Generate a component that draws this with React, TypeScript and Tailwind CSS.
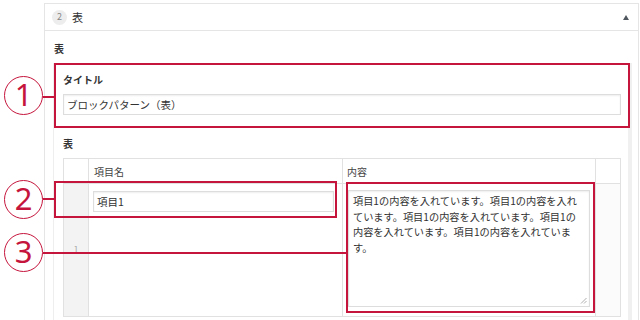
const red = "border-[#c5153c]";

const lines = [
  "項目1の内容を入れています。項目1の内容を入れ",
  "ています。項目1の内容を入れています。項目1の",
  "内容を入れています。項目1の内容を入れていま",
  "す。",
];

function Circle({ n, top }: { n: string; top: number }) {
  return (
    <div
      className="absolute left-[4px] w-[39px] h-[39px] rounded-full border-[1.5px] border-[#c5153c] flex items-center justify-center text-[#c5153c] text-[31px] leading-none font-['Noto_Sans',sans-serif]"
      style={{ top }}
    >
      <span className="-mt-[2px]">{n}</span>
    </div>
  );
}

export default function App() {
  return (
    <div className="relative w-[640px] h-[320px] overflow-hidden bg-white text-[#333] font-['Noto_Sans_CJK_JP','Noto_Sans',sans-serif]">
      <div className="ml-[44px] mt-[3px] w-[595px] h-[340px] border border-[#e5e5e5] bg-white">
        {/* header */}
        <div className="h-[27px] flex items-center pl-[7px] pr-[9px] border-b border-[#e5e5e5]">
          <span className="w-[15px] h-[15px] rounded-full bg-[#ededed] text-[#888] text-[9px] flex items-center justify-center">
            2
          </span>
          <span className="ml-[5px] text-[11px] leading-none">表</span>
          <span className="ml-auto w-0 h-0 border-l-[3px] border-r-[3px] border-b-[5px] border-l-transparent border-r-transparent border-b-[#50575e]" />
        </div>

        <div className="pl-[8px] pr-[6px] pt-[11px]">
          <div className="ml-px text-[10px] font-bold leading-[14px]">表</div>
          <div className="mt-[7px] h-[260px] border border-[#eee] border-r-4 border-r-[#f0f0f0] pl-[9px] pr-[7px] pt-[9px]">
            <div className="text-[10px] font-bold leading-[14px]">タイトル</div>
            <div className="mt-[7px] h-[21px] border border-[#ddd] shadow-[inset_0_1px_2px_rgba(0,0,0,0.07)] flex items-center px-[3px] text-[10.5px]">
              ブロックパターン（表）
            </div>
            <div className="mt-[22px] text-[10px] font-bold leading-[14px]">表</div>

            {/* table */}
            <div className="mt-[7px] w-[558px] border border-[#e1e1e1] text-[10px]">
              <div className="flex h-[25px] border-b border-[#e1e1e1]">
                <div className="w-[25px] border-r border-[#e1e1e1]" />
                <div className="w-[254px] border-r border-[#e1e1e1] pl-[5px] flex items-center text-[#444]">
                  項目名
                </div>
                <div className="w-[253px] border-r border-[#e1e1e1] pl-[4px] flex items-center text-[#444]">
                  内容
                </div>
                <div className="flex-1" />
              </div>
              <div className="flex h-[132px]">
                <div className="w-[25px] border-r border-[#e1e1e1] bg-[#f3f3f3] flex items-center justify-center text-[#aaa] text-[9px]">
                  1
                </div>
                <div className="w-[254px] border-r border-[#e1e1e1] pl-[4px] pt-[7px]">
                  <div className="w-[241px] h-[21px] border border-[#ddd] shadow-[inset_0_1px_2px_rgba(0,0,0,0.07)] flex items-center px-[3px] text-[10.5px]">
                    項目1
                  </div>
                </div>
                <div className="w-[253px] border-r border-[#e1e1e1] pl-[5px] pt-[6px]">
                  <div className="relative w-[242px] h-[117px] border border-[#ddd] shadow-[inset_0_1px_2px_rgba(0,0,0,0.07)] pl-[4px] pt-[2px] text-[10.2px] leading-[15.5px] whitespace-nowrap">
                    {lines.map((l) => (
                      <div key={l}>{l}</div>
                    ))}
                    <svg className="absolute right-[2px] bottom-[2px]" width="7" height="7" viewBox="0 0 7 7">
                      <path d="M1 6.5L6.5 1M4 6.5L6.5 4" stroke="#999" strokeWidth="0.8" />
                    </svg>
                  </div>
                </div>
                <div className="flex-1 bg-[#fbfbfb]" />
              </div>
            </div>
          </div>
        </div>
      </div>

      {/* annotations */}
      <div className={`absolute left-[54px] top-[63px] w-[576px] h-[65px] border-2 ${red}`} />
      <div className={`absolute left-[54px] top-[181px] w-[283px] h-[37px] border-2 ${red}`} />
      <div className={`absolute left-[346px] top-[182px] w-[249px] h-[131px] border-2 ${red}`} />

      <Circle n="1" top={76} />
      <Circle n="2" top={180} />
      <Circle n="3" top={233} />

      <div className="absolute left-[43px] top-[96px] w-[11px] h-[2px] bg-[#c5153c]" />
      <div className="absolute left-[43px] top-[198px] w-[11px] h-[2px] bg-[#c5153c]" />
      <div className="absolute left-[43px] top-[252px] w-[303px] h-[2px] bg-[#c5153c]" />
    </div>
  );
}
